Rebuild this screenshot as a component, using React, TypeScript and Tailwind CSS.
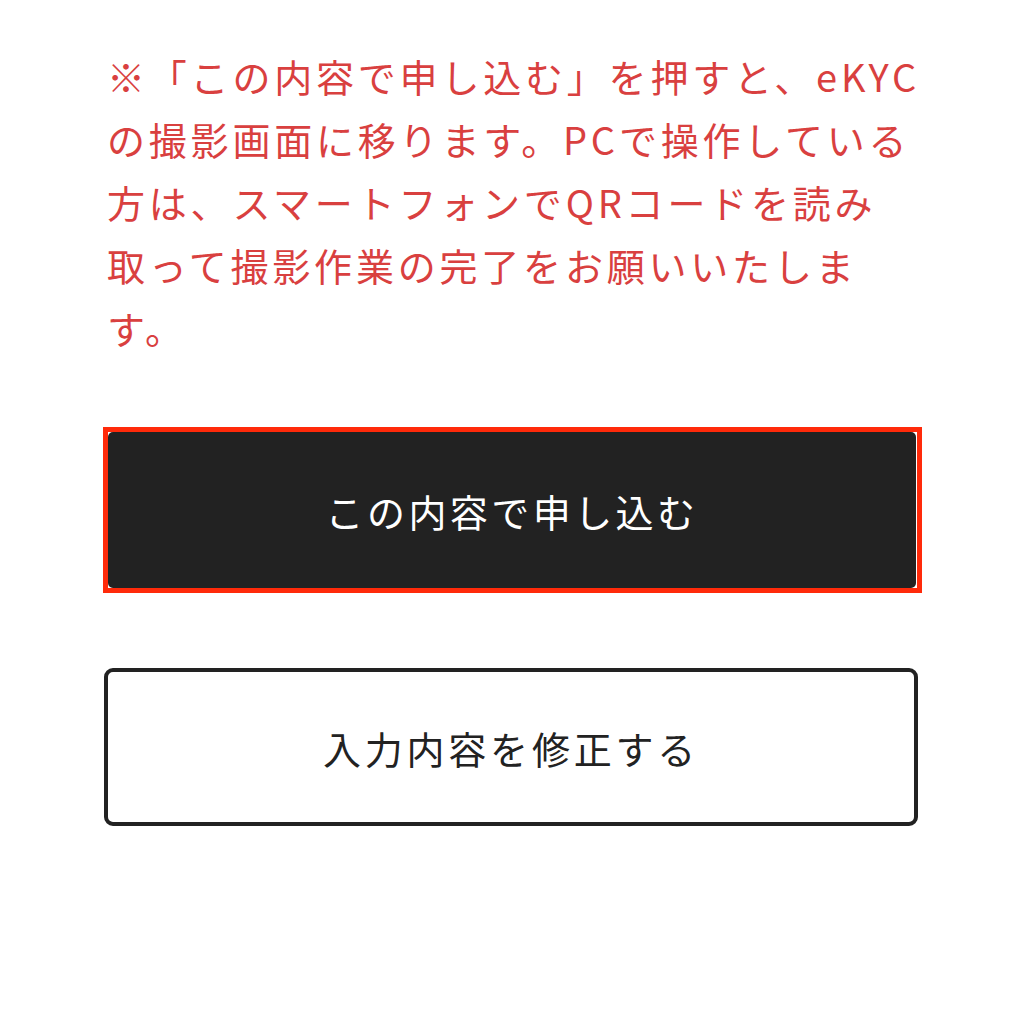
export default function App() {
  return (
    <div
      className="min-h-[1010px] w-[1024px] bg-white"
      style={{ fontFamily: '"Noto Sans CJK JP", "Noto Sans", sans-serif' }}
    >
      <div className="flex flex-col pl-[103px] pt-[44px]">
        {/* Notice */}
        <p className="ml-[4px] w-[830px] whitespace-nowrap text-[38px] leading-[63px] tracking-[0.1em] text-[#d9403f]">
          ※「この内容で申し込む」を押すと、eKYC
          <br />
          の撮影画面に移ります。PCで操作している
          <br />
          方は、スマートフォンでQRコードを読み
          <br />
          取って撮影作業の完了をお願いいたしま
          <br />
          す。
        </p>

        {/* Submit (highlighted) */}
        <div className="mt-[68px] w-[819px] border-[5px] border-[#ff2a0a]">
          <button className="flex h-[156px] w-[808px] items-center justify-center rounded-[5px] bg-[#222222] pt-[1px] text-[38px] tracking-[0.09em] text-white">
            この内容で申し込む
          </button>
        </div>

        {/* Edit */}
        <button className="ml-[1px] mt-[75px] flex h-[158px] w-[814px] items-center justify-center rounded-[9px] border-4 border-[#222222] bg-white pt-[1px] text-[38px] tracking-[0.1em] text-[#222222]">
          入力内容を修正する
        </button>
      </div>
    </div>
  );
}
